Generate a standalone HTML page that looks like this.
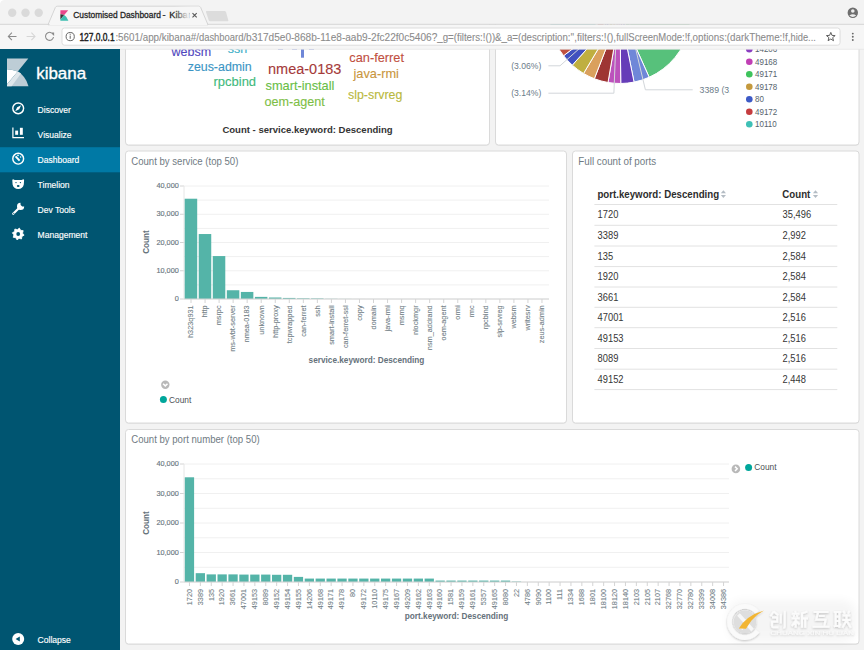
<!DOCTYPE html><html><head><meta charset="utf-8"><title>Kibana Dashboard</title><style>html,body{margin:0;padding:0;width:864px;height:650px;overflow:hidden;background:#f3f3f3}svg{display:block;font-family:"Liberation Sans",sans-serif}</style></head><body>
<svg width="864" height="650" viewBox="0 0 864 650">
<rect x="0" y="0" width="864" height="650" fill="#f3f3f3"/>
<rect x="125.5" y="20.8" width="364" height="125" rx="3" fill="#e4e4e4"/>
<rect x="125.5" y="20" width="364" height="125" rx="3" fill="#ffffff" stroke="#dadada" stroke-width="1"/>
<rect x="495.5" y="20.8" width="363.5" height="125" rx="3" fill="#e4e4e4"/>
<rect x="495.5" y="20" width="363.5" height="125" rx="3" fill="#ffffff" stroke="#dadada" stroke-width="1"/>
<rect x="125.5" y="151.8" width="441" height="272" rx="3" fill="#e4e4e4"/>
<rect x="125.5" y="151" width="441" height="272" rx="3" fill="#ffffff" stroke="#dadada" stroke-width="1"/>
<rect x="572.5" y="151.8" width="286.5" height="272" rx="3" fill="#e4e4e4"/>
<rect x="572.5" y="151" width="286.5" height="272" rx="3" fill="#ffffff" stroke="#dadada" stroke-width="1"/>
<rect x="125.5" y="430.3" width="733.5" height="214.5" rx="3" fill="#e4e4e4"/>
<rect x="125.5" y="429.5" width="733.5" height="214.5" rx="3" fill="#ffffff" stroke="#dadada" stroke-width="1"/>
<text x="0" y="0" transform="translate(171.50,55.90) scale(0.952,1)" font-size="13.125" fill="#5046be" stroke="#5046be" stroke-width="0.12">websm</text>
<text x="0" y="0" transform="translate(227.80,53.00) scale(0.952,1)" font-size="13.125" fill="#3aaec6" stroke="#3aaec6" stroke-width="0.12">ssh</text>
<text x="0" y="0" transform="translate(187.70,70.70) scale(0.952,1)" font-size="13.020000000000001" fill="#3a94c4" stroke="#3a94c4" stroke-width="0.12">zeus-admin</text>
<text x="0" y="0" transform="translate(213.50,86.40) scale(0.952,1)" font-size="13.65" fill="#3fba7c" stroke="#3fba7c" stroke-width="0.12">rpcbind</text>
<text x="0" y="0" transform="translate(268.00,73.70) scale(0.952,1)" font-size="15.225000000000001" fill="#a53a3a" stroke="#a53a3a" stroke-width="0.12">nmea-0183</text>
<text x="0" y="0" transform="translate(265.50,89.80) scale(0.952,1)" font-size="13.440000000000001" fill="#69be46" stroke="#69be46" stroke-width="0.12">smart-install</text>
<text x="0" y="0" transform="translate(264.50,105.50) scale(0.952,1)" font-size="13.23" fill="#7dbe46" stroke="#7dbe46" stroke-width="0.12">oem-agent</text>
<text x="0" y="0" transform="translate(349.30,61.50) scale(0.952,1)" font-size="13.440000000000001" fill="#c1503f" stroke="#c1503f" stroke-width="0.12">can-ferret</text>
<text x="0" y="0" transform="translate(353.50,77.80) scale(0.952,1)" font-size="13.440000000000001" fill="#c9963e" stroke="#c9963e" stroke-width="0.12">java-rmi</text>
<text x="0" y="0" transform="translate(348.00,99.00) scale(0.952,1)" font-size="13.020000000000001" fill="#b9b93e" stroke="#b9b93e" stroke-width="0.12">slp-srvreg</text>
<rect x="301" y="46" width="3" height="11.7" fill="#6f87d8"/>
<rect x="278" y="48.6" width="5" height="1.2" fill="#8fa0e0"/>
<rect x="292" y="48.6" width="5" height="1.2" fill="#8fa0e0"/>
<rect x="309" y="48.6" width="5" height="1.2" fill="#8fa0e0"/>
<text x="0" y="0" transform="translate(222.40,132.50) scale(0.965,1)" font-size="9.9" fill="#343434" font-weight="bold">Count - service.keyword: Descending</text>
<g stroke="#ffffff" stroke-width="1">
<path d="M620,12.3 L674.54,-33.47 A71.2,71.2 0 0 1 649.19,77.24 Z" fill="#57c17b"/>
<path d="M620,12.3 L649.19,77.24 A71.2,71.2 0 0 1 634.07,82.10 Z" fill="#6f87d8"/>
<path d="M620,12.3 L634.07,82.10 A71.2,71.2 0 0 1 620.75,83.50 Z" fill="#663db8"/>
<path d="M620,12.3 L620.75,83.50 A71.2,71.2 0 0 1 608.00,82.48 Z" fill="#bc52bc"/>
<path d="M620,12.3 L608.00,82.48 A71.2,71.2 0 0 1 594.37,78.73 Z" fill="#9e3533"/>
<path d="M620,12.3 L594.37,78.73 A71.2,71.2 0 0 1 583.54,73.46 Z" fill="#daa05d"/>
<path d="M620,12.3 L583.54,73.46 A71.2,71.2 0 0 1 572.27,65.13 Z" fill="#bfaf40"/>
<path d="M620,12.3 L572.27,65.13 A71.2,71.2 0 0 1 563.59,55.74 Z" fill="#4050bf"/>
<path d="M620,12.3 L563.59,55.74 A71.2,71.2 0 0 1 556.84,45.18 Z" fill="#bf5040"/>
<path d="M620,12.3 L556.84,45.18 A71.2,71.2 0 0 1 565.46,-33.47 Z" fill="#40bfb9"/>
</g>
<polyline points="548.4,65.8 560,65.8 620,12.3" fill="none" stroke="#d2d6da" stroke-width="1"/>
<polyline points="548.4,93.2 613.9,93.2 617,12.3" fill="none" stroke="#d2d6da" stroke-width="1"/>
<polyline points="692.7,89.8 645.4,89.8 627,12.3" fill="none" stroke="#d2d6da" stroke-width="1"/>
<text x="0" y="0" transform="translate(511.20,69.00) scale(0.935,1)" font-size="9.2" fill="#6b7c89">(3.06%)</text>
<text x="0" y="0" transform="translate(511.20,96.40) scale(0.935,1)" font-size="9.2" fill="#6b7c89">(3.14%)</text>
<clipPath id="pc"><rect x="690" y="70" width="40" height="30"/></clipPath>
<g clip-path="url(#pc)">
<text x="0" y="0" transform="translate(699.60,93.00) scale(0.94,1)" font-size="9.3" fill="#6b7c89">3389 (3.25%)</text>
</g>
<circle cx="749.3" cy="49.2" r="3.3" fill="#8a3fc1"/>
<text x="0" y="0" transform="translate(755.00,52.40) scale(0.93,1)" font-size="8.6" fill="#56636c">14206</text>
<circle cx="749.3" cy="61.7" r="3.3" fill="#c03fb4"/>
<text x="0" y="0" transform="translate(755.00,64.90) scale(0.93,1)" font-size="8.6" fill="#56636c">49168</text>
<circle cx="749.3" cy="74.2" r="3.3" fill="#3ec35c"/>
<text x="0" y="0" transform="translate(755.00,77.40) scale(0.93,1)" font-size="8.6" fill="#56636c">49171</text>
<circle cx="749.3" cy="86.7" r="3.3" fill="#c4993d"/>
<text x="0" y="0" transform="translate(755.00,89.90) scale(0.93,1)" font-size="8.6" fill="#56636c">49178</text>
<circle cx="749.3" cy="99.2" r="3.3" fill="#3d5ac6"/>
<text x="0" y="0" transform="translate(755.00,102.40) scale(0.93,1)" font-size="8.6" fill="#56636c">80</text>
<circle cx="749.3" cy="111.7" r="3.3" fill="#c53c3f"/>
<text x="0" y="0" transform="translate(755.00,114.90) scale(0.93,1)" font-size="8.6" fill="#56636c">49172</text>
<circle cx="749.3" cy="124.2" r="3.3" fill="#3fc0b6"/>
<text x="0" y="0" transform="translate(755.00,127.40) scale(0.93,1)" font-size="8.6" fill="#56636c">10110</text>
<text x="0" y="0" transform="translate(131.20,164.80) scale(0.96,1)" font-size="10.0" fill="#707b83">Count by service (top 50)</text>
<line x1="184" y1="299.00" x2="549" y2="299.00" stroke="#f0f0f0" stroke-width="1"/>
<line x1="184" y1="284.88" x2="549" y2="284.88" stroke="#f0f0f0" stroke-width="1"/>
<line x1="184" y1="270.75" x2="549" y2="270.75" stroke="#f0f0f0" stroke-width="1"/>
<line x1="184" y1="256.62" x2="549" y2="256.62" stroke="#f0f0f0" stroke-width="1"/>
<line x1="184" y1="242.50" x2="549" y2="242.50" stroke="#f0f0f0" stroke-width="1"/>
<line x1="184" y1="228.38" x2="549" y2="228.38" stroke="#f0f0f0" stroke-width="1"/>
<line x1="184" y1="214.25" x2="549" y2="214.25" stroke="#f0f0f0" stroke-width="1"/>
<line x1="184" y1="200.12" x2="549" y2="200.12" stroke="#f0f0f0" stroke-width="1"/>
<line x1="184" y1="186.00" x2="549" y2="186.00" stroke="#f0f0f0" stroke-width="1"/>
<line x1="180" y1="299.00" x2="184" y2="299.00" stroke="#d4d4d4" stroke-width="1"/>
<text x="178.80" y="301.10" font-size="7.3" fill="#6b7781" text-anchor="end" stroke="#6b7781" stroke-width="0.15">0</text>
<line x1="180" y1="270.75" x2="184" y2="270.75" stroke="#d4d4d4" stroke-width="1"/>
<text x="178.80" y="272.85" font-size="7.3" fill="#6b7781" text-anchor="end" stroke="#6b7781" stroke-width="0.15">10,000</text>
<line x1="180" y1="242.50" x2="184" y2="242.50" stroke="#d4d4d4" stroke-width="1"/>
<text x="178.80" y="244.60" font-size="7.3" fill="#6b7781" text-anchor="end" stroke="#6b7781" stroke-width="0.15">20,000</text>
<line x1="180" y1="214.25" x2="184" y2="214.25" stroke="#d4d4d4" stroke-width="1"/>
<text x="178.80" y="216.35" font-size="7.3" fill="#6b7781" text-anchor="end" stroke="#6b7781" stroke-width="0.15">30,000</text>
<line x1="180" y1="186.00" x2="184" y2="186.00" stroke="#d4d4d4" stroke-width="1"/>
<text x="178.80" y="188.10" font-size="7.3" fill="#6b7781" text-anchor="end" stroke="#6b7781" stroke-width="0.15">40,000</text>
<line x1="184" y1="186" x2="184" y2="299" stroke="#e6e6e6" stroke-width="1"/>
<rect x="184.70" y="198.72" width="12.50" height="100.28" fill="#54b4a8"/>
<rect x="198.74" y="234.03" width="12.50" height="64.97" fill="#54b4a8"/>
<rect x="212.78" y="256.06" width="12.50" height="42.94" fill="#54b4a8"/>
<rect x="226.82" y="290.24" width="12.50" height="8.76" fill="#54b4a8"/>
<rect x="240.85" y="291.94" width="12.50" height="7.06" fill="#54b4a8"/>
<rect x="254.89" y="296.88" width="12.50" height="2.12" fill="#54b4a8"/>
<rect x="268.93" y="297.50" width="12.50" height="1.50" fill="#54b4a8"/>
<rect x="282.97" y="297.93" width="12.50" height="1.07" fill="#54b4a8"/>
<rect x="297.01" y="298.32" width="12.50" height="0.68" fill="#54b4a8"/>
<rect x="311.05" y="298.44" width="12.50" height="0.56" fill="#54b4a8"/>
<rect x="325.08" y="298.83" width="12.50" height="0.17" fill="#54b4a8"/>
<rect x="339.12" y="298.92" width="12.50" height="0.08" fill="#54b4a8"/>
<rect x="353.16" y="298.97" width="12.50" height="0.03" fill="#54b4a8"/>
<rect x="367.20" y="298.98" width="12.50" height="0.02" fill="#54b4a8"/>
<rect x="381.24" y="298.98" width="12.50" height="0.02" fill="#54b4a8"/>
<rect x="395.28" y="298.99" width="12.50" height="0.01" fill="#54b4a8"/>
<rect x="409.32" y="298.99" width="12.50" height="0.01" fill="#54b4a8"/>
<rect x="423.35" y="298.99" width="12.50" height="0.01" fill="#54b4a8"/>
<rect x="437.39" y="298.99" width="12.50" height="0.01" fill="#54b4a8"/>
<rect x="451.43" y="298.99" width="12.50" height="0.01" fill="#54b4a8"/>
<rect x="465.47" y="298.99" width="12.50" height="0.01" fill="#54b4a8"/>
<rect x="479.51" y="298.99" width="12.50" height="0.01" fill="#54b4a8"/>
<rect x="493.55" y="298.99" width="12.50" height="0.01" fill="#54b4a8"/>
<rect x="507.58" y="298.99" width="12.50" height="0.01" fill="#54b4a8"/>
<rect x="521.62" y="298.99" width="12.50" height="0.01" fill="#54b4a8"/>
<rect x="535.66" y="298.99" width="12.50" height="0.01" fill="#54b4a8"/>
<line x1="184" y1="299" x2="549" y2="299" stroke="#d4d4d4" stroke-width="1"/>
<line x1="191.02" y1="299" x2="191.02" y2="303" stroke="#d4d4d4" stroke-width="1"/>
<text x="0" y="0" font-size="7.6" fill="#737f88" stroke="#737f88" stroke-width="0.1" text-anchor="end" transform="translate(193.32,305.40) rotate(-90) scale(0.965,1)">h323q931</text>
<line x1="205.06" y1="299" x2="205.06" y2="303" stroke="#d4d4d4" stroke-width="1"/>
<text x="0" y="0" font-size="7.6" fill="#737f88" stroke="#737f88" stroke-width="0.1" text-anchor="end" transform="translate(207.36,305.40) rotate(-90) scale(0.965,1)">http</text>
<line x1="219.10" y1="299" x2="219.10" y2="303" stroke="#d4d4d4" stroke-width="1"/>
<text x="0" y="0" font-size="7.6" fill="#737f88" stroke="#737f88" stroke-width="0.1" text-anchor="end" transform="translate(221.40,305.40) rotate(-90) scale(0.965,1)">msrpc</text>
<line x1="233.13" y1="299" x2="233.13" y2="303" stroke="#d4d4d4" stroke-width="1"/>
<text x="0" y="0" font-size="7.6" fill="#737f88" stroke="#737f88" stroke-width="0.1" text-anchor="end" transform="translate(235.43,305.40) rotate(-90) scale(0.965,1)">ms-wbt-server</text>
<line x1="247.17" y1="299" x2="247.17" y2="303" stroke="#d4d4d4" stroke-width="1"/>
<text x="0" y="0" font-size="7.6" fill="#737f88" stroke="#737f88" stroke-width="0.1" text-anchor="end" transform="translate(249.47,305.40) rotate(-90) scale(0.965,1)">nmea-0183</text>
<line x1="261.21" y1="299" x2="261.21" y2="303" stroke="#d4d4d4" stroke-width="1"/>
<text x="0" y="0" font-size="7.6" fill="#737f88" stroke="#737f88" stroke-width="0.1" text-anchor="end" transform="translate(263.51,305.40) rotate(-90) scale(0.965,1)">unknown</text>
<line x1="275.25" y1="299" x2="275.25" y2="303" stroke="#d4d4d4" stroke-width="1"/>
<text x="0" y="0" font-size="7.6" fill="#737f88" stroke="#737f88" stroke-width="0.1" text-anchor="end" transform="translate(277.55,305.40) rotate(-90) scale(0.965,1)">http-proxy</text>
<line x1="289.29" y1="299" x2="289.29" y2="303" stroke="#d4d4d4" stroke-width="1"/>
<text x="0" y="0" font-size="7.6" fill="#737f88" stroke="#737f88" stroke-width="0.1" text-anchor="end" transform="translate(291.59,305.40) rotate(-90) scale(0.965,1)">tcpwrapped</text>
<line x1="303.33" y1="299" x2="303.33" y2="303" stroke="#d4d4d4" stroke-width="1"/>
<text x="0" y="0" font-size="7.6" fill="#737f88" stroke="#737f88" stroke-width="0.1" text-anchor="end" transform="translate(305.63,305.40) rotate(-90) scale(0.965,1)">can-ferret</text>
<line x1="317.37" y1="299" x2="317.37" y2="303" stroke="#d4d4d4" stroke-width="1"/>
<text x="0" y="0" font-size="7.6" fill="#737f88" stroke="#737f88" stroke-width="0.1" text-anchor="end" transform="translate(319.67,305.40) rotate(-90) scale(0.965,1)">ssh</text>
<line x1="331.40" y1="299" x2="331.40" y2="303" stroke="#d4d4d4" stroke-width="1"/>
<text x="0" y="0" font-size="7.6" fill="#737f88" stroke="#737f88" stroke-width="0.1" text-anchor="end" transform="translate(333.70,305.40) rotate(-90) scale(0.965,1)">smart-install</text>
<line x1="345.44" y1="299" x2="345.44" y2="303" stroke="#d4d4d4" stroke-width="1"/>
<text x="0" y="0" font-size="7.6" fill="#737f88" stroke="#737f88" stroke-width="0.1" text-anchor="end" transform="translate(347.74,305.40) rotate(-90) scale(0.965,1)">can-ferret-ssl</text>
<line x1="359.48" y1="299" x2="359.48" y2="303" stroke="#d4d4d4" stroke-width="1"/>
<text x="0" y="0" font-size="7.6" fill="#737f88" stroke="#737f88" stroke-width="0.1" text-anchor="end" transform="translate(361.78,305.40) rotate(-90) scale(0.965,1)">copy</text>
<line x1="373.52" y1="299" x2="373.52" y2="303" stroke="#d4d4d4" stroke-width="1"/>
<text x="0" y="0" font-size="7.6" fill="#737f88" stroke="#737f88" stroke-width="0.1" text-anchor="end" transform="translate(375.82,305.40) rotate(-90) scale(0.965,1)">domain</text>
<line x1="387.56" y1="299" x2="387.56" y2="303" stroke="#d4d4d4" stroke-width="1"/>
<text x="0" y="0" font-size="7.6" fill="#737f88" stroke="#737f88" stroke-width="0.1" text-anchor="end" transform="translate(389.86,305.40) rotate(-90) scale(0.965,1)">java-rmi</text>
<line x1="401.60" y1="299" x2="401.60" y2="303" stroke="#d4d4d4" stroke-width="1"/>
<text x="0" y="0" font-size="7.6" fill="#737f88" stroke="#737f88" stroke-width="0.1" text-anchor="end" transform="translate(403.90,305.40) rotate(-90) scale(0.965,1)">msmq</text>
<line x1="415.63" y1="299" x2="415.63" y2="303" stroke="#d4d4d4" stroke-width="1"/>
<text x="0" y="0" font-size="7.6" fill="#737f88" stroke="#737f88" stroke-width="0.1" text-anchor="end" transform="translate(417.93,305.40) rotate(-90) scale(0.965,1)">nlockmgr</text>
<line x1="429.67" y1="299" x2="429.67" y2="303" stroke="#d4d4d4" stroke-width="1"/>
<text x="0" y="0" font-size="7.6" fill="#737f88" stroke="#737f88" stroke-width="0.1" text-anchor="end" transform="translate(431.97,305.40) rotate(-90) scale(0.965,1)">nsm_addrand</text>
<line x1="443.71" y1="299" x2="443.71" y2="303" stroke="#d4d4d4" stroke-width="1"/>
<text x="0" y="0" font-size="7.6" fill="#737f88" stroke="#737f88" stroke-width="0.1" text-anchor="end" transform="translate(446.01,305.40) rotate(-90) scale(0.965,1)">oem-agent</text>
<line x1="457.75" y1="299" x2="457.75" y2="303" stroke="#d4d4d4" stroke-width="1"/>
<text x="0" y="0" font-size="7.6" fill="#737f88" stroke="#737f88" stroke-width="0.1" text-anchor="end" transform="translate(460.05,305.40) rotate(-90) scale(0.965,1)">ormi</text>
<line x1="471.79" y1="299" x2="471.79" y2="303" stroke="#d4d4d4" stroke-width="1"/>
<text x="0" y="0" font-size="7.6" fill="#737f88" stroke="#737f88" stroke-width="0.1" text-anchor="end" transform="translate(474.09,305.40) rotate(-90) scale(0.965,1)">rmc</text>
<line x1="485.83" y1="299" x2="485.83" y2="303" stroke="#d4d4d4" stroke-width="1"/>
<text x="0" y="0" font-size="7.6" fill="#737f88" stroke="#737f88" stroke-width="0.1" text-anchor="end" transform="translate(488.13,305.40) rotate(-90) scale(0.965,1)">rpcbind</text>
<line x1="499.87" y1="299" x2="499.87" y2="303" stroke="#d4d4d4" stroke-width="1"/>
<text x="0" y="0" font-size="7.6" fill="#737f88" stroke="#737f88" stroke-width="0.1" text-anchor="end" transform="translate(502.17,305.40) rotate(-90) scale(0.965,1)">slp-srvreg</text>
<line x1="513.90" y1="299" x2="513.90" y2="303" stroke="#d4d4d4" stroke-width="1"/>
<text x="0" y="0" font-size="7.6" fill="#737f88" stroke="#737f88" stroke-width="0.1" text-anchor="end" transform="translate(516.20,305.40) rotate(-90) scale(0.965,1)">websm</text>
<line x1="527.94" y1="299" x2="527.94" y2="303" stroke="#d4d4d4" stroke-width="1"/>
<text x="0" y="0" font-size="7.6" fill="#737f88" stroke="#737f88" stroke-width="0.1" text-anchor="end" transform="translate(530.24,305.40) rotate(-90) scale(0.965,1)">writesrv</text>
<line x1="541.98" y1="299" x2="541.98" y2="303" stroke="#d4d4d4" stroke-width="1"/>
<text x="0" y="0" font-size="7.6" fill="#737f88" stroke="#737f88" stroke-width="0.1" text-anchor="end" transform="translate(544.28,305.40) rotate(-90) scale(0.965,1)">zeus-admin</text>
<text x="149.00" y="242.00" font-size="8.2" fill="#66727b" font-weight="bold" text-anchor="middle" transform="rotate(-90 149.0 242)">Count</text>
<text x="0" y="0" transform="translate(366.50,363.20) scale(0.96,1)" font-size="8.6" fill="#66727b" font-weight="bold" text-anchor="middle">service.keyword: Descending</text>
<circle cx="165.3" cy="384.8" r="4.2" fill="#b9b9b9"/>
<path d="M163.1,383.7 L165.3,385.9 L167.5,383.7" fill="none" stroke="#ffffff" stroke-width="1.5"/>
<circle cx="163.4" cy="399.4" r="3.5" fill="#00a69b"/>
<text x="0" y="0" transform="translate(169.00,402.60) scale(0.95,1)" font-size="8.8" fill="#4c5155">Count</text>
<text x="0" y="0" transform="translate(578.30,164.80) scale(0.98,1)" font-size="10.0" fill="#707b83">Full count of ports</text>
<text x="0" y="0" transform="translate(597.40,197.80) scale(0.941,1)" font-size="10.3" fill="#2d2d2d" font-weight="bold">port.keyword: Descending</text>
<text x="0" y="0" transform="translate(782.30,197.80) scale(0.941,1)" font-size="10.3" fill="#2d2d2d" font-weight="bold">Count</text>
<path d="M720.8,193.3 L723.4,190.3 L726.0,193.3 Z" fill="#b4bcc4"/>
<path d="M720.8,194.9 L723.4,197.9 L726.0,194.9 Z" fill="#b4bcc4"/>
<path d="M812.9,193.3 L815.5,190.3 L818.1,193.3 Z" fill="#b4bcc4"/>
<path d="M812.9,194.9 L815.5,197.9 L818.1,194.9 Z" fill="#b4bcc4"/>
<line x1="594.4" y1="204.5" x2="837.3" y2="204.5" stroke="#e2e2e2" stroke-width="1"/>
<line x1="594.4" y1="225.3" x2="837.3" y2="225.3" stroke="#e2e2e2" stroke-width="1"/>
<line x1="594.4" y1="246.0" x2="837.3" y2="246.0" stroke="#e2e2e2" stroke-width="1"/>
<line x1="594.4" y1="266.6" x2="837.3" y2="266.6" stroke="#e2e2e2" stroke-width="1"/>
<line x1="594.4" y1="287.0" x2="837.3" y2="287.0" stroke="#e2e2e2" stroke-width="1"/>
<line x1="594.4" y1="307.3" x2="837.3" y2="307.3" stroke="#e2e2e2" stroke-width="1"/>
<line x1="594.4" y1="327.7" x2="837.3" y2="327.7" stroke="#e2e2e2" stroke-width="1"/>
<line x1="594.4" y1="348.5" x2="837.3" y2="348.5" stroke="#e2e2e2" stroke-width="1"/>
<line x1="594.4" y1="369.2" x2="837.3" y2="369.2" stroke="#e2e2e2" stroke-width="1"/>
<line x1="594.4" y1="389.6" x2="837.3" y2="389.6" stroke="#e2e2e2" stroke-width="1"/>
<text x="0" y="0" transform="translate(597.60,218.30) scale(0.905,1)" font-size="10.3" fill="#363636">1720</text>
<text x="0" y="0" transform="translate(782.60,218.30) scale(0.905,1)" font-size="10.3" fill="#363636">35,496</text>
<text x="0" y="0" transform="translate(597.60,239.10) scale(0.905,1)" font-size="10.3" fill="#363636">3389</text>
<text x="0" y="0" transform="translate(782.60,239.10) scale(0.905,1)" font-size="10.3" fill="#363636">2,992</text>
<text x="0" y="0" transform="translate(597.60,259.80) scale(0.905,1)" font-size="10.3" fill="#363636">135</text>
<text x="0" y="0" transform="translate(782.60,259.80) scale(0.905,1)" font-size="10.3" fill="#363636">2,584</text>
<text x="0" y="0" transform="translate(597.60,280.40) scale(0.905,1)" font-size="10.3" fill="#363636">1920</text>
<text x="0" y="0" transform="translate(782.60,280.40) scale(0.905,1)" font-size="10.3" fill="#363636">2,584</text>
<text x="0" y="0" transform="translate(597.60,300.80) scale(0.905,1)" font-size="10.3" fill="#363636">3661</text>
<text x="0" y="0" transform="translate(782.60,300.80) scale(0.905,1)" font-size="10.3" fill="#363636">2,584</text>
<text x="0" y="0" transform="translate(597.60,321.10) scale(0.905,1)" font-size="10.3" fill="#363636">47001</text>
<text x="0" y="0" transform="translate(782.60,321.10) scale(0.905,1)" font-size="10.3" fill="#363636">2,516</text>
<text x="0" y="0" transform="translate(597.60,341.50) scale(0.905,1)" font-size="10.3" fill="#363636">49153</text>
<text x="0" y="0" transform="translate(782.60,341.50) scale(0.905,1)" font-size="10.3" fill="#363636">2,516</text>
<text x="0" y="0" transform="translate(597.60,362.30) scale(0.905,1)" font-size="10.3" fill="#363636">8089</text>
<text x="0" y="0" transform="translate(782.60,362.30) scale(0.905,1)" font-size="10.3" fill="#363636">2,516</text>
<text x="0" y="0" transform="translate(597.60,383.00) scale(0.905,1)" font-size="10.3" fill="#363636">49152</text>
<text x="0" y="0" transform="translate(782.60,383.00) scale(0.905,1)" font-size="10.3" fill="#363636">2,448</text>
<text x="0" y="0" transform="translate(131.20,442.90) scale(0.96,1)" font-size="10.0" fill="#707b83">Count by port number (top 50)</text>
<line x1="184" y1="582.00" x2="729" y2="582.00" stroke="#f0f0f0" stroke-width="1"/>
<line x1="184" y1="567.25" x2="729" y2="567.25" stroke="#f0f0f0" stroke-width="1"/>
<line x1="184" y1="552.50" x2="729" y2="552.50" stroke="#f0f0f0" stroke-width="1"/>
<line x1="184" y1="537.75" x2="729" y2="537.75" stroke="#f0f0f0" stroke-width="1"/>
<line x1="184" y1="523.00" x2="729" y2="523.00" stroke="#f0f0f0" stroke-width="1"/>
<line x1="184" y1="508.25" x2="729" y2="508.25" stroke="#f0f0f0" stroke-width="1"/>
<line x1="184" y1="493.50" x2="729" y2="493.50" stroke="#f0f0f0" stroke-width="1"/>
<line x1="184" y1="478.75" x2="729" y2="478.75" stroke="#f0f0f0" stroke-width="1"/>
<line x1="184" y1="464.00" x2="729" y2="464.00" stroke="#f0f0f0" stroke-width="1"/>
<line x1="180" y1="582.00" x2="184" y2="582.00" stroke="#d4d4d4" stroke-width="1"/>
<text x="178.80" y="584.10" font-size="7.3" fill="#6b7781" text-anchor="end" stroke="#6b7781" stroke-width="0.15">0</text>
<line x1="180" y1="552.50" x2="184" y2="552.50" stroke="#d4d4d4" stroke-width="1"/>
<text x="178.80" y="554.60" font-size="7.3" fill="#6b7781" text-anchor="end" stroke="#6b7781" stroke-width="0.15">10,000</text>
<line x1="180" y1="523.00" x2="184" y2="523.00" stroke="#d4d4d4" stroke-width="1"/>
<text x="178.80" y="525.10" font-size="7.3" fill="#6b7781" text-anchor="end" stroke="#6b7781" stroke-width="0.15">20,000</text>
<line x1="180" y1="493.50" x2="184" y2="493.50" stroke="#d4d4d4" stroke-width="1"/>
<text x="178.80" y="495.60" font-size="7.3" fill="#6b7781" text-anchor="end" stroke="#6b7781" stroke-width="0.15">30,000</text>
<line x1="180" y1="464.00" x2="184" y2="464.00" stroke="#d4d4d4" stroke-width="1"/>
<text x="178.80" y="466.10" font-size="7.3" fill="#6b7781" text-anchor="end" stroke="#6b7781" stroke-width="0.15">40,000</text>
<line x1="184" y1="464" x2="184" y2="582" stroke="#e6e6e6" stroke-width="1"/>
<rect x="184.80" y="477.29" width="9.30" height="104.71" fill="#54b4a8"/>
<rect x="195.70" y="573.17" width="9.30" height="8.83" fill="#54b4a8"/>
<rect x="206.60" y="574.38" width="9.30" height="7.62" fill="#54b4a8"/>
<rect x="217.50" y="574.38" width="9.30" height="7.62" fill="#54b4a8"/>
<rect x="228.40" y="574.38" width="9.30" height="7.62" fill="#54b4a8"/>
<rect x="239.30" y="574.58" width="9.30" height="7.42" fill="#54b4a8"/>
<rect x="250.20" y="574.58" width="9.30" height="7.42" fill="#54b4a8"/>
<rect x="261.10" y="574.58" width="9.30" height="7.42" fill="#54b4a8"/>
<rect x="272.00" y="574.78" width="9.30" height="7.22" fill="#54b4a8"/>
<rect x="282.90" y="574.78" width="9.30" height="7.22" fill="#54b4a8"/>
<rect x="293.80" y="576.90" width="9.30" height="5.10" fill="#54b4a8"/>
<rect x="304.70" y="578.58" width="9.30" height="3.42" fill="#54b4a8"/>
<rect x="315.60" y="578.58" width="9.30" height="3.42" fill="#54b4a8"/>
<rect x="326.50" y="578.58" width="9.30" height="3.42" fill="#54b4a8"/>
<rect x="337.40" y="578.58" width="9.30" height="3.42" fill="#54b4a8"/>
<rect x="348.30" y="578.58" width="9.30" height="3.42" fill="#54b4a8"/>
<rect x="359.20" y="578.58" width="9.30" height="3.42" fill="#54b4a8"/>
<rect x="370.10" y="578.58" width="9.30" height="3.42" fill="#54b4a8"/>
<rect x="381.00" y="578.58" width="9.30" height="3.42" fill="#54b4a8"/>
<rect x="391.90" y="578.58" width="9.30" height="3.42" fill="#54b4a8"/>
<rect x="402.80" y="578.58" width="9.30" height="3.42" fill="#54b4a8"/>
<rect x="413.70" y="578.58" width="9.30" height="3.42" fill="#54b4a8"/>
<rect x="424.60" y="578.58" width="9.30" height="3.42" fill="#54b4a8"/>
<rect x="435.50" y="580.58" width="9.30" height="1.42" fill="#54b4a8"/>
<rect x="446.40" y="580.58" width="9.30" height="1.42" fill="#54b4a8"/>
<rect x="457.30" y="580.58" width="9.30" height="1.42" fill="#54b4a8"/>
<rect x="468.20" y="580.58" width="9.30" height="1.42" fill="#54b4a8"/>
<rect x="479.10" y="580.58" width="9.30" height="1.42" fill="#54b4a8"/>
<rect x="490.00" y="580.58" width="9.30" height="1.42" fill="#54b4a8"/>
<rect x="500.90" y="580.58" width="9.30" height="1.42" fill="#54b4a8"/>
<rect x="511.80" y="581.56" width="9.30" height="0.44" fill="#54b4a8"/>
<line x1="184" y1="582" x2="729" y2="582" stroke="#d4d4d4" stroke-width="1"/>
<line x1="189.45" y1="582" x2="189.45" y2="586" stroke="#d4d4d4" stroke-width="1"/>
<text x="0" y="0" font-size="7.6" fill="#737f88" stroke="#737f88" stroke-width="0.1" text-anchor="end" transform="translate(191.75,588.90) rotate(-90) scale(0.965,1)">1720</text>
<line x1="200.35" y1="582" x2="200.35" y2="586" stroke="#d4d4d4" stroke-width="1"/>
<text x="0" y="0" font-size="7.6" fill="#737f88" stroke="#737f88" stroke-width="0.1" text-anchor="end" transform="translate(202.65,588.90) rotate(-90) scale(0.965,1)">3389</text>
<line x1="211.25" y1="582" x2="211.25" y2="586" stroke="#d4d4d4" stroke-width="1"/>
<text x="0" y="0" font-size="7.6" fill="#737f88" stroke="#737f88" stroke-width="0.1" text-anchor="end" transform="translate(213.55,588.90) rotate(-90) scale(0.965,1)">135</text>
<line x1="222.15" y1="582" x2="222.15" y2="586" stroke="#d4d4d4" stroke-width="1"/>
<text x="0" y="0" font-size="7.6" fill="#737f88" stroke="#737f88" stroke-width="0.1" text-anchor="end" transform="translate(224.45,588.90) rotate(-90) scale(0.965,1)">1920</text>
<line x1="233.05" y1="582" x2="233.05" y2="586" stroke="#d4d4d4" stroke-width="1"/>
<text x="0" y="0" font-size="7.6" fill="#737f88" stroke="#737f88" stroke-width="0.1" text-anchor="end" transform="translate(235.35,588.90) rotate(-90) scale(0.965,1)">3661</text>
<line x1="243.95" y1="582" x2="243.95" y2="586" stroke="#d4d4d4" stroke-width="1"/>
<text x="0" y="0" font-size="7.6" fill="#737f88" stroke="#737f88" stroke-width="0.1" text-anchor="end" transform="translate(246.25,588.90) rotate(-90) scale(0.965,1)">47001</text>
<line x1="254.85" y1="582" x2="254.85" y2="586" stroke="#d4d4d4" stroke-width="1"/>
<text x="0" y="0" font-size="7.6" fill="#737f88" stroke="#737f88" stroke-width="0.1" text-anchor="end" transform="translate(257.15,588.90) rotate(-90) scale(0.965,1)">49153</text>
<line x1="265.75" y1="582" x2="265.75" y2="586" stroke="#d4d4d4" stroke-width="1"/>
<text x="0" y="0" font-size="7.6" fill="#737f88" stroke="#737f88" stroke-width="0.1" text-anchor="end" transform="translate(268.05,588.90) rotate(-90) scale(0.965,1)">8089</text>
<line x1="276.65" y1="582" x2="276.65" y2="586" stroke="#d4d4d4" stroke-width="1"/>
<text x="0" y="0" font-size="7.6" fill="#737f88" stroke="#737f88" stroke-width="0.1" text-anchor="end" transform="translate(278.95,588.90) rotate(-90) scale(0.965,1)">49152</text>
<line x1="287.55" y1="582" x2="287.55" y2="586" stroke="#d4d4d4" stroke-width="1"/>
<text x="0" y="0" font-size="7.6" fill="#737f88" stroke="#737f88" stroke-width="0.1" text-anchor="end" transform="translate(289.85,588.90) rotate(-90) scale(0.965,1)">49154</text>
<line x1="298.45" y1="582" x2="298.45" y2="586" stroke="#d4d4d4" stroke-width="1"/>
<text x="0" y="0" font-size="7.6" fill="#737f88" stroke="#737f88" stroke-width="0.1" text-anchor="end" transform="translate(300.75,588.90) rotate(-90) scale(0.965,1)">49155</text>
<line x1="309.35" y1="582" x2="309.35" y2="586" stroke="#d4d4d4" stroke-width="1"/>
<text x="0" y="0" font-size="7.6" fill="#737f88" stroke="#737f88" stroke-width="0.1" text-anchor="end" transform="translate(311.65,588.90) rotate(-90) scale(0.965,1)">14206</text>
<line x1="320.25" y1="582" x2="320.25" y2="586" stroke="#d4d4d4" stroke-width="1"/>
<text x="0" y="0" font-size="7.6" fill="#737f88" stroke="#737f88" stroke-width="0.1" text-anchor="end" transform="translate(322.55,588.90) rotate(-90) scale(0.965,1)">49168</text>
<line x1="331.15" y1="582" x2="331.15" y2="586" stroke="#d4d4d4" stroke-width="1"/>
<text x="0" y="0" font-size="7.6" fill="#737f88" stroke="#737f88" stroke-width="0.1" text-anchor="end" transform="translate(333.45,588.90) rotate(-90) scale(0.965,1)">49171</text>
<line x1="342.05" y1="582" x2="342.05" y2="586" stroke="#d4d4d4" stroke-width="1"/>
<text x="0" y="0" font-size="7.6" fill="#737f88" stroke="#737f88" stroke-width="0.1" text-anchor="end" transform="translate(344.35,588.90) rotate(-90) scale(0.965,1)">49178</text>
<line x1="352.95" y1="582" x2="352.95" y2="586" stroke="#d4d4d4" stroke-width="1"/>
<text x="0" y="0" font-size="7.6" fill="#737f88" stroke="#737f88" stroke-width="0.1" text-anchor="end" transform="translate(355.25,588.90) rotate(-90) scale(0.965,1)">80</text>
<line x1="363.85" y1="582" x2="363.85" y2="586" stroke="#d4d4d4" stroke-width="1"/>
<text x="0" y="0" font-size="7.6" fill="#737f88" stroke="#737f88" stroke-width="0.1" text-anchor="end" transform="translate(366.15,588.90) rotate(-90) scale(0.965,1)">49172</text>
<line x1="374.75" y1="582" x2="374.75" y2="586" stroke="#d4d4d4" stroke-width="1"/>
<text x="0" y="0" font-size="7.6" fill="#737f88" stroke="#737f88" stroke-width="0.1" text-anchor="end" transform="translate(377.05,588.90) rotate(-90) scale(0.965,1)">10110</text>
<line x1="385.65" y1="582" x2="385.65" y2="586" stroke="#d4d4d4" stroke-width="1"/>
<text x="0" y="0" font-size="7.6" fill="#737f88" stroke="#737f88" stroke-width="0.1" text-anchor="end" transform="translate(387.95,588.90) rotate(-90) scale(0.965,1)">49175</text>
<line x1="396.55" y1="582" x2="396.55" y2="586" stroke="#d4d4d4" stroke-width="1"/>
<text x="0" y="0" font-size="7.6" fill="#737f88" stroke="#737f88" stroke-width="0.1" text-anchor="end" transform="translate(398.85,588.90) rotate(-90) scale(0.965,1)">49167</text>
<line x1="407.45" y1="582" x2="407.45" y2="586" stroke="#d4d4d4" stroke-width="1"/>
<text x="0" y="0" font-size="7.6" fill="#737f88" stroke="#737f88" stroke-width="0.1" text-anchor="end" transform="translate(409.75,588.90) rotate(-90) scale(0.965,1)">49209</text>
<line x1="418.35" y1="582" x2="418.35" y2="586" stroke="#d4d4d4" stroke-width="1"/>
<text x="0" y="0" font-size="7.6" fill="#737f88" stroke="#737f88" stroke-width="0.1" text-anchor="end" transform="translate(420.65,588.90) rotate(-90) scale(0.965,1)">49162</text>
<line x1="429.25" y1="582" x2="429.25" y2="586" stroke="#d4d4d4" stroke-width="1"/>
<text x="0" y="0" font-size="7.6" fill="#737f88" stroke="#737f88" stroke-width="0.1" text-anchor="end" transform="translate(431.55,588.90) rotate(-90) scale(0.965,1)">49163</text>
<line x1="440.15" y1="582" x2="440.15" y2="586" stroke="#d4d4d4" stroke-width="1"/>
<text x="0" y="0" font-size="7.6" fill="#737f88" stroke="#737f88" stroke-width="0.1" text-anchor="end" transform="translate(442.45,588.90) rotate(-90) scale(0.965,1)">49160</text>
<line x1="451.05" y1="582" x2="451.05" y2="586" stroke="#d4d4d4" stroke-width="1"/>
<text x="0" y="0" font-size="7.6" fill="#737f88" stroke="#737f88" stroke-width="0.1" text-anchor="end" transform="translate(453.35,588.90) rotate(-90) scale(0.965,1)">1581</text>
<line x1="461.95" y1="582" x2="461.95" y2="586" stroke="#d4d4d4" stroke-width="1"/>
<text x="0" y="0" font-size="7.6" fill="#737f88" stroke="#737f88" stroke-width="0.1" text-anchor="end" transform="translate(464.25,588.90) rotate(-90) scale(0.965,1)">49159</text>
<line x1="472.85" y1="582" x2="472.85" y2="586" stroke="#d4d4d4" stroke-width="1"/>
<text x="0" y="0" font-size="7.6" fill="#737f88" stroke="#737f88" stroke-width="0.1" text-anchor="end" transform="translate(475.15,588.90) rotate(-90) scale(0.965,1)">49161</text>
<line x1="483.75" y1="582" x2="483.75" y2="586" stroke="#d4d4d4" stroke-width="1"/>
<text x="0" y="0" font-size="7.6" fill="#737f88" stroke="#737f88" stroke-width="0.1" text-anchor="end" transform="translate(486.05,588.90) rotate(-90) scale(0.965,1)">5357</text>
<line x1="494.65" y1="582" x2="494.65" y2="586" stroke="#d4d4d4" stroke-width="1"/>
<text x="0" y="0" font-size="7.6" fill="#737f88" stroke="#737f88" stroke-width="0.1" text-anchor="end" transform="translate(496.95,588.90) rotate(-90) scale(0.965,1)">49165</text>
<line x1="505.55" y1="582" x2="505.55" y2="586" stroke="#d4d4d4" stroke-width="1"/>
<text x="0" y="0" font-size="7.6" fill="#737f88" stroke="#737f88" stroke-width="0.1" text-anchor="end" transform="translate(507.85,588.90) rotate(-90) scale(0.965,1)">8080</text>
<line x1="516.45" y1="582" x2="516.45" y2="586" stroke="#d4d4d4" stroke-width="1"/>
<text x="0" y="0" font-size="7.6" fill="#737f88" stroke="#737f88" stroke-width="0.1" text-anchor="end" transform="translate(518.75,588.90) rotate(-90) scale(0.965,1)">22</text>
<line x1="527.35" y1="582" x2="527.35" y2="586" stroke="#d4d4d4" stroke-width="1"/>
<text x="0" y="0" font-size="7.6" fill="#737f88" stroke="#737f88" stroke-width="0.1" text-anchor="end" transform="translate(529.65,588.90) rotate(-90) scale(0.965,1)">4786</text>
<line x1="538.25" y1="582" x2="538.25" y2="586" stroke="#d4d4d4" stroke-width="1"/>
<text x="0" y="0" font-size="7.6" fill="#737f88" stroke="#737f88" stroke-width="0.1" text-anchor="end" transform="translate(540.55,588.90) rotate(-90) scale(0.965,1)">9090</text>
<line x1="549.15" y1="582" x2="549.15" y2="586" stroke="#d4d4d4" stroke-width="1"/>
<text x="0" y="0" font-size="7.6" fill="#737f88" stroke="#737f88" stroke-width="0.1" text-anchor="end" transform="translate(551.45,588.90) rotate(-90) scale(0.965,1)">1100</text>
<line x1="560.05" y1="582" x2="560.05" y2="586" stroke="#d4d4d4" stroke-width="1"/>
<text x="0" y="0" font-size="7.6" fill="#737f88" stroke="#737f88" stroke-width="0.1" text-anchor="end" transform="translate(562.35,588.90) rotate(-90) scale(0.965,1)">111</text>
<line x1="570.95" y1="582" x2="570.95" y2="586" stroke="#d4d4d4" stroke-width="1"/>
<text x="0" y="0" font-size="7.6" fill="#737f88" stroke="#737f88" stroke-width="0.1" text-anchor="end" transform="translate(573.25,588.90) rotate(-90) scale(0.965,1)">1334</text>
<line x1="581.85" y1="582" x2="581.85" y2="586" stroke="#d4d4d4" stroke-width="1"/>
<text x="0" y="0" font-size="7.6" fill="#737f88" stroke="#737f88" stroke-width="0.1" text-anchor="end" transform="translate(584.15,588.90) rotate(-90) scale(0.965,1)">1688</text>
<line x1="592.75" y1="582" x2="592.75" y2="586" stroke="#d4d4d4" stroke-width="1"/>
<text x="0" y="0" font-size="7.6" fill="#737f88" stroke="#737f88" stroke-width="0.1" text-anchor="end" transform="translate(595.05,588.90) rotate(-90) scale(0.965,1)">1801</text>
<line x1="603.65" y1="582" x2="603.65" y2="586" stroke="#d4d4d4" stroke-width="1"/>
<text x="0" y="0" font-size="7.6" fill="#737f88" stroke="#737f88" stroke-width="0.1" text-anchor="end" transform="translate(605.95,588.90) rotate(-90) scale(0.965,1)">18100</text>
<line x1="614.55" y1="582" x2="614.55" y2="586" stroke="#d4d4d4" stroke-width="1"/>
<text x="0" y="0" font-size="7.6" fill="#737f88" stroke="#737f88" stroke-width="0.1" text-anchor="end" transform="translate(616.85,588.90) rotate(-90) scale(0.965,1)">18120</text>
<line x1="625.45" y1="582" x2="625.45" y2="586" stroke="#d4d4d4" stroke-width="1"/>
<text x="0" y="0" font-size="7.6" fill="#737f88" stroke="#737f88" stroke-width="0.1" text-anchor="end" transform="translate(627.75,588.90) rotate(-90) scale(0.965,1)">18140</text>
<line x1="636.35" y1="582" x2="636.35" y2="586" stroke="#d4d4d4" stroke-width="1"/>
<text x="0" y="0" font-size="7.6" fill="#737f88" stroke="#737f88" stroke-width="0.1" text-anchor="end" transform="translate(638.65,588.90) rotate(-90) scale(0.965,1)">2103</text>
<line x1="647.25" y1="582" x2="647.25" y2="586" stroke="#d4d4d4" stroke-width="1"/>
<text x="0" y="0" font-size="7.6" fill="#737f88" stroke="#737f88" stroke-width="0.1" text-anchor="end" transform="translate(649.55,588.90) rotate(-90) scale(0.965,1)">2105</text>
<line x1="658.15" y1="582" x2="658.15" y2="586" stroke="#d4d4d4" stroke-width="1"/>
<text x="0" y="0" font-size="7.6" fill="#737f88" stroke="#737f88" stroke-width="0.1" text-anchor="end" transform="translate(660.45,588.90) rotate(-90) scale(0.965,1)">2107</text>
<line x1="669.05" y1="582" x2="669.05" y2="586" stroke="#d4d4d4" stroke-width="1"/>
<text x="0" y="0" font-size="7.6" fill="#737f88" stroke="#737f88" stroke-width="0.1" text-anchor="end" transform="translate(671.35,588.90) rotate(-90) scale(0.965,1)">32768</text>
<line x1="679.95" y1="582" x2="679.95" y2="586" stroke="#d4d4d4" stroke-width="1"/>
<text x="0" y="0" font-size="7.6" fill="#737f88" stroke="#737f88" stroke-width="0.1" text-anchor="end" transform="translate(682.25,588.90) rotate(-90) scale(0.965,1)">32770</text>
<line x1="690.85" y1="582" x2="690.85" y2="586" stroke="#d4d4d4" stroke-width="1"/>
<text x="0" y="0" font-size="7.6" fill="#737f88" stroke="#737f88" stroke-width="0.1" text-anchor="end" transform="translate(693.15,588.90) rotate(-90) scale(0.965,1)">32780</text>
<line x1="701.75" y1="582" x2="701.75" y2="586" stroke="#d4d4d4" stroke-width="1"/>
<text x="0" y="0" font-size="7.6" fill="#737f88" stroke="#737f88" stroke-width="0.1" text-anchor="end" transform="translate(704.05,588.90) rotate(-90) scale(0.965,1)">33399</text>
<line x1="712.65" y1="582" x2="712.65" y2="586" stroke="#d4d4d4" stroke-width="1"/>
<text x="0" y="0" font-size="7.6" fill="#737f88" stroke="#737f88" stroke-width="0.1" text-anchor="end" transform="translate(714.95,588.90) rotate(-90) scale(0.965,1)">34008</text>
<line x1="723.55" y1="582" x2="723.55" y2="586" stroke="#d4d4d4" stroke-width="1"/>
<text x="0" y="0" font-size="7.6" fill="#737f88" stroke="#737f88" stroke-width="0.1" text-anchor="end" transform="translate(725.85,588.90) rotate(-90) scale(0.965,1)">34386</text>
<text x="149.00" y="523.00" font-size="8.2" fill="#66727b" font-weight="bold" text-anchor="middle" transform="rotate(-90 149.0 523)">Count</text>
<text x="0" y="0" transform="translate(456.50,619.00) scale(0.96,1)" font-size="8.6" fill="#66727b" font-weight="bold" text-anchor="middle">port.keyword: Descending</text>
<circle cx="735.9" cy="468.9" r="4.3" fill="#b9b9b9"/>
<path d="M735.0,466.6 L737.2,468.8 L735.0,471" fill="none" stroke="#ffffff" stroke-width="1.5"/>
<circle cx="748.6" cy="467.4" r="3.5" fill="#00a69b"/>
<text x="0" y="0" transform="translate(754.20,470.20) scale(0.95,1)" font-size="8.8" fill="#4c5155">Count</text>
<defs><filter id="blur" x="-50%" y="-50%" width="200%" height="200%"><feGaussianBlur stdDeviation="5"/></filter><filter id="sh" x="-30%" y="-30%" width="160%" height="160%"><feGaussianBlur in="SourceAlpha" stdDeviation="1.2"/><feOffset dx="0" dy="0.6"/><feComponentTransfer><feFuncA type="linear" slope="0.22"/></feComponentTransfer><feMerge><feMergeNode/><feMergeNode in="SourceGraphic"/></feMerge></filter></defs>
<rect x="728" y="600" width="128" height="42" rx="14" fill="#000" opacity="0.035" filter="url(#blur)"/>
<g filter="url(#sh)">
<circle cx="745" cy="621.8" r="11.2" fill="#dedede"/>
<path d="M757.2,612.2 A15.6,15.6 0 1 0 757.6,631.2" fill="none" stroke="#fafafa" stroke-width="4.6"/>
<path d="M738.5,614.5 L752.5,630 M747.5,620 L741,629" stroke="#f7f7f7" stroke-width="3.6"/>
<path d="M738.8,628.6 Q746,615.5 764,610.4 Q757,614 751.5,620.4 Q748.5,624.6 746,628.8 Z" fill="#f2b533"/>
</g>
<g filter="url(#sh)" fill="none" stroke="#fbfbfb" stroke-width="2.1" stroke-linecap="butt">
<path transform="translate(770.2,610.8)" d="M3.5,0.5 L0.3,5.5 M3.5,0.5 L8.2,4.6 M1.8,6.6 H7 V11 H1.8 V15.2 Q1.8,16.4 3.2,16.4 H8.2 M10.6,3 V12.6 M14.6,0 V16 Q14.6,17 13,16.6"/>
<path transform="translate(791.4,610.8)" d="M3.6,0 L4.4,2 M0.4,3 H8 M2.2,4.2 L3,6.2 M6,4.2 L5.2,6.2 M0.2,7.4 H8.4 M4.3,7.4 V17 M4.3,10 L0.4,15.2 M4.3,10 L8.2,13.6 M16,0.6 L10.6,2.4 V17 M10.6,7.6 H16.6 M13.8,7.6 V17"/>
<path transform="translate(812.6,610.8)" d="M1,1.2 H16 M5.6,1.2 L3.6,9 H13 L11.6,15.8 M6.4,5.2 H12.2 M0,16 H17"/>
<path transform="translate(833.8,610.8)" d="M0,1.2 H7.4 M1.8,1.2 V15 M5.6,1.2 V17 M1.8,5.8 H5.6 M1.8,10.2 H5.6 M0,15.4 L7.4,13.6 M9.6,0 L11,3 M15.6,0 L14.2,3 M8.8,4.6 H16.6 M8.4,9.2 H17 M12.7,4.6 V9.6 L8.6,17 M12.7,9.6 L17,17"/>
</g>
<text x="770.5" y="634.6" font-size="4.6" fill="#fafafa" textLength="83.5" lengthAdjust="spacingAndGlyphs" filter="url(#sh)">CHUANG XIN HU LIAN</text>
<rect x="0" y="40" width="120" height="610" fill="#005571"/>
<rect x="0" y="147.2" width="120" height="25.1" fill="#0079a5"/>
<path d="M7,58.5 H28.3 L17.8,71.6 Q12.5,69.4 7,69.2 Z" fill="#bdcdd6"/>
<path d="M17.8,71.6 Q25.5,76 28.5,86.2 H7 Z" fill="#bdcdd6"/>
<path d="M7,69.2 Q12.5,69.4 17.8,71.6 L7,84.3 Z" fill="#ffffff"/>
<path d="M17.8,71.6 Q19.6,72.6 21,73.6 L11.6,86.2 H7 V84.3 Z" fill="#dfe7eb"/>
<text x="0" y="0" transform="translate(36.20,78.60) scale(0.975,1)" font-size="17.4" fill="#ffffff" stroke="#ffffff" stroke-width="0.35">kibana</text>
<text x="0" y="0" transform="translate(37.60,112.50) scale(0.95,1)" font-size="9.0" fill="#ffffff" stroke="#ffffff" stroke-width="0.15">Discover</text>
<text x="0" y="0" transform="translate(37.60,137.65) scale(0.95,1)" font-size="9.0" fill="#ffffff" stroke="#ffffff" stroke-width="0.15">Visualize</text>
<text x="0" y="0" transform="translate(37.60,162.80) scale(0.95,1)" font-size="9.0" fill="#ffffff" stroke="#ffffff" stroke-width="0.15">Dashboard</text>
<text x="0" y="0" transform="translate(37.60,187.95) scale(0.95,1)" font-size="9.0" fill="#ffffff" stroke="#ffffff" stroke-width="0.15">Timelion</text>
<text x="0" y="0" transform="translate(37.60,213.10) scale(0.95,1)" font-size="9.0" fill="#ffffff" stroke="#ffffff" stroke-width="0.15">Dev Tools</text>
<text x="0" y="0" transform="translate(37.60,238.25) scale(0.95,1)" font-size="9.0" fill="#ffffff" stroke="#ffffff" stroke-width="0.15">Management</text>
<text x="0" y="0" transform="translate(37.60,643.00) scale(0.95,1)" font-size="9.0" fill="#ffffff" stroke="#ffffff" stroke-width="0.15">Collapse</text>
<circle cx="18.2" cy="108.3" r="5.4" fill="none" stroke="#ffffff" stroke-width="1.45"/>
<path d="M21.2,105.3 L19.2,109.3 L15.2,111.3 L17.2,107.3 Z" fill="#ffffff"/>
<path d="M12.9,127.6 V137.6 H24" fill="none" stroke="#ffffff" stroke-width="1.2"/>
<rect x="15.2" y="130.6" width="2.9" height="4.2" fill="#ffffff"/>
<rect x="19.9" y="127.8" width="2.9" height="7.0" fill="#ffffff"/>
<circle cx="18.2" cy="158.7" r="5.4" fill="none" stroke="#ffffff" stroke-width="1.45"/>
<path d="M15.6,156.4 L19.6,160.6" stroke="#ffffff" stroke-width="2"/>
<circle cx="18" cy="155.4" r="0.8" fill="#ffffff"/><circle cx="20.6" cy="157" r="0.7" fill="#ffffff"/>
<path d="M12.3,180.2 Q12.4,179.2 13.6,179.4 Q15,180 16,179.9 H20.4 Q21.4,180 22.8,179.4 Q24,179.2 24.1,180.2 L23.8,184.6 Q22.8,189 18.2,189 Q13.6,189 12.6,184.6 Z" fill="#ffffff"/>
<circle cx="16" cy="182.6" r="0.7" fill="#005571"/><circle cx="20.4" cy="182.6" r="0.7" fill="#005571"/>
<ellipse cx="18.2" cy="186" rx="1.4" ry="0.9" fill="#005571"/>
<path d="M13.2,213.8 L19.3,207.7" stroke="#ffffff" stroke-width="2.2" stroke-linecap="round"/>
<path d="M20.5,202.8 A3.6,3.6 0 1 0 24.2,206.4 L22.2,206.6 L20.6,205 Z" fill="#ffffff"/>
<circle cx="13.8" cy="213.3" r="0.6" fill="#005571"/>
<polygon points="19.37,228.12 20.64,230.34 23.19,230.67 22.52,233.14 24.08,235.17 21.86,236.44 21.53,238.99 19.06,238.32 17.03,239.88 15.76,237.66 13.21,237.33 13.88,234.86 12.32,232.83 14.54,231.56 14.87,229.01 17.34,229.68" fill="#ffffff" stroke="#ffffff" stroke-width="0.8" stroke-linejoin="round"/>
<circle cx="18.2" cy="234" r="1.9" fill="#005571"/>
<circle cx="18.2" cy="639" r="6" fill="#ffffff"/>
<path d="M15.6,639 L19.8,636.4 V641.6 Z" fill="#005571"/>
<rect x="0" y="0" width="864" height="24.5" fill="#f3f3f3"/>
<rect x="0" y="24.5" width="864" height="24.5" fill="#f6f6f6"/>
<line x1="0" y1="24.3" x2="864" y2="24.3" stroke="#cdcdcd" stroke-width="0.8"/>
<line x1="120" y1="49.3" x2="864" y2="49.3" stroke="#e6e6e6" stroke-width="0.8"/>
<circle cx="12.2" cy="12.7" r="4.2" fill="#dadada"/>
<circle cx="25.5" cy="12.7" r="4.2" fill="#dadada"/>
<circle cx="38.7" cy="12.7" r="4.2" fill="#dadada"/>
<path d="M48,24.8 L55.4,7.3 Q56,6.2 57.4,6.2 H198.6 Q200,6.2 200.6,7.3 L208,24.8 Z" fill="#f6f6f6" stroke="#cdcdcd" stroke-width="0.8"/>
<path d="M0,0 H4 Q0.5,0.5 0,4 Z" fill="#ffffff"/>
<rect x="49.6" y="24" width="157.6" height="1.2" fill="#f6f6f6"/>
<path d="M206.5,11 H224.5 Q225.6,11 226,12 L228.4,20.5 Q228.6,21.3 227.6,21.3 H210 Q209,21.3 208.8,20.5 L206,12 Q205.8,11 206.5,11 Z" fill="#dcdcdc"/>
<path d="M60.4,10.2 H68.2 L64.2,15 Q62.4,14.4 60.4,14.3 Z" fill="#e8478b"/>
<path d="M60.4,14.3 Q62.4,14.4 64.2,15 L60.4,19.6 Z" fill="#353535"/>
<path d="M64.2,15 Q67.2,16.8 68.4,20.8 H60.4 V19.6 Z" fill="#3ebeb0"/>
<defs><linearGradient id="fade" x1="0" x2="1"><stop offset="0" stop-color="#f6f6f6" stop-opacity="0"/><stop offset="1" stop-color="#f6f6f6" stop-opacity="1"/></linearGradient></defs>
<text x="73.2" y="18.4" font-size="9.3" fill="#262626" stroke="#262626" stroke-width="0.3" textLength="44.4" lengthAdjust="spacingAndGlyphs">Customised</text>
<text x="119.9" y="18.4" font-size="9.3" fill="#262626" stroke="#262626" stroke-width="0.3" textLength="41.0" lengthAdjust="spacingAndGlyphs">Dashboard</text>
<text x="162.4" y="18.4" font-size="9.3" fill="#262626" stroke="#262626" stroke-width="0.3">-</text>
<text x="169.2" y="18.4" font-size="9.3" fill="#262626" stroke="#262626" stroke-width="0.3">Kiban</text>
<rect x="173.5" y="6.6" width="16" height="16" fill="url(#fade)"/>
<rect x="189.5" y="6.6" width="10" height="16" fill="#f6f6f6"/>
<path d="M192.5,13.2 L196.7,17.4 M196.7,13.2 L192.5,17.4" stroke="#555555" stroke-width="1.05"/>
<circle cx="852.8" cy="12.8" r="5.2" fill="#6e6e6e"/>
<circle cx="852.8" cy="11.0" r="1.8" fill="#ececec"/>
<path d="M849.4,15.6 Q852.8,12.8 856.2,15.6 Q852.8,18.2 849.4,15.6 Z" fill="#ececec"/>
<path d="M8.3,36.4 H16.5 M11.9,32.6 L8.3,36.4 L11.9,40.2" fill="none" stroke="#8a8a8a" stroke-width="1.05"/>
<path d="M26.6,36.4 H35 M31.4,32.6 L35,36.4 L31.4,40.2" fill="none" stroke="#d6d6d6" stroke-width="1.05"/>
<path d="M51.2,32.7 A4,4 0 1 0 53.5,37" fill="none" stroke="#8a8a8a" stroke-width="1.05"/>
<path d="M50.4,32.4 L54.1,32.4 L54.1,36.1 Z" fill="#8a8a8a"/>
<rect x="62" y="28" width="778" height="17.2" rx="2.5" fill="#ffffff" stroke="#d6d6d6" stroke-width="0.8"/>
<circle cx="70.2" cy="36.6" r="4.1" fill="none" stroke="#666" stroke-width="1"/>
<rect x="69.7" y="35.6" width="1" height="3.2" fill="#666"/><rect x="69.7" y="33.8" width="1" height="1" fill="#666"/>
<text x="79.4" y="40.5" font-size="10.8" fill="#1e1e1e" stroke="#1e1e1e" stroke-width="0.45" textLength="35.2" lengthAdjust="spacingAndGlyphs">127.0.0.1</text>
<text x="115.4" y="40.5" font-size="10.8" fill="#8c8c8c" stroke="#8c8c8c" stroke-width="0.1" textLength="83.5" lengthAdjust="spacingAndGlyphs">:5601/app/kibana#/</text>
<text x="198.9" y="40.5" font-size="10.8" fill="#8c8c8c" stroke="#8c8c8c" stroke-width="0.1" textLength="47.2" lengthAdjust="spacingAndGlyphs">dashboard/</text>
<text x="246.1" y="40.5" font-size="10.8" fill="#8c8c8c" stroke="#8c8c8c" stroke-width="0.1" textLength="191.2" lengthAdjust="spacingAndGlyphs">b317d5e0-868b-11e8-aab9-2fc22f0c5406?</text>
<text x="437.3" y="40.5" font-size="10.8" fill="#8c8c8c" stroke="#8c8c8c" stroke-width="0.1" textLength="80.7" lengthAdjust="spacingAndGlyphs">_g=(filters:!())&amp;_a=</text>
<text x="518.0" y="40.5" font-size="10.8" fill="#8c8c8c" stroke="#8c8c8c" stroke-width="0.1" textLength="58.9" lengthAdjust="spacingAndGlyphs">(description:'',</text>
<text x="576.9" y="40.5" font-size="10.8" fill="#8c8c8c" stroke="#8c8c8c" stroke-width="0.1" textLength="39.3" lengthAdjust="spacingAndGlyphs">filters:!(),</text>
<text x="616.2" y="40.5" font-size="10.8" fill="#8c8c8c" stroke="#8c8c8c" stroke-width="0.1" textLength="76.4" lengthAdjust="spacingAndGlyphs">fullScreenMode:!f,</text>
<text x="692.6" y="40.5" font-size="10.8" fill="#8c8c8c" stroke="#8c8c8c" stroke-width="0.1" textLength="97.9" lengthAdjust="spacingAndGlyphs">options:(darkTheme:!f,</text>
<text x="790.5" y="40.5" font-size="10.8" fill="#8c8c8c" stroke="#8c8c8c" stroke-width="0.1" textLength="25.3" lengthAdjust="spacingAndGlyphs">hide...</text>
<polygon points="830.80,32.40 831.98,35.38 835.17,35.58 832.70,37.62 833.50,40.72 830.80,39.00 828.10,40.72 828.90,37.62 826.43,35.58 829.62,35.38" fill="none" stroke="#5f5f5f" stroke-width="1" stroke-linejoin="round"/>
<circle cx="852.8" cy="33.6" r="0.95" fill="#6a6a6a"/>
<circle cx="852.8" cy="36.8" r="0.95" fill="#6a6a6a"/>
<circle cx="852.8" cy="40.0" r="0.95" fill="#6a6a6a"/>
</svg></body></html>
